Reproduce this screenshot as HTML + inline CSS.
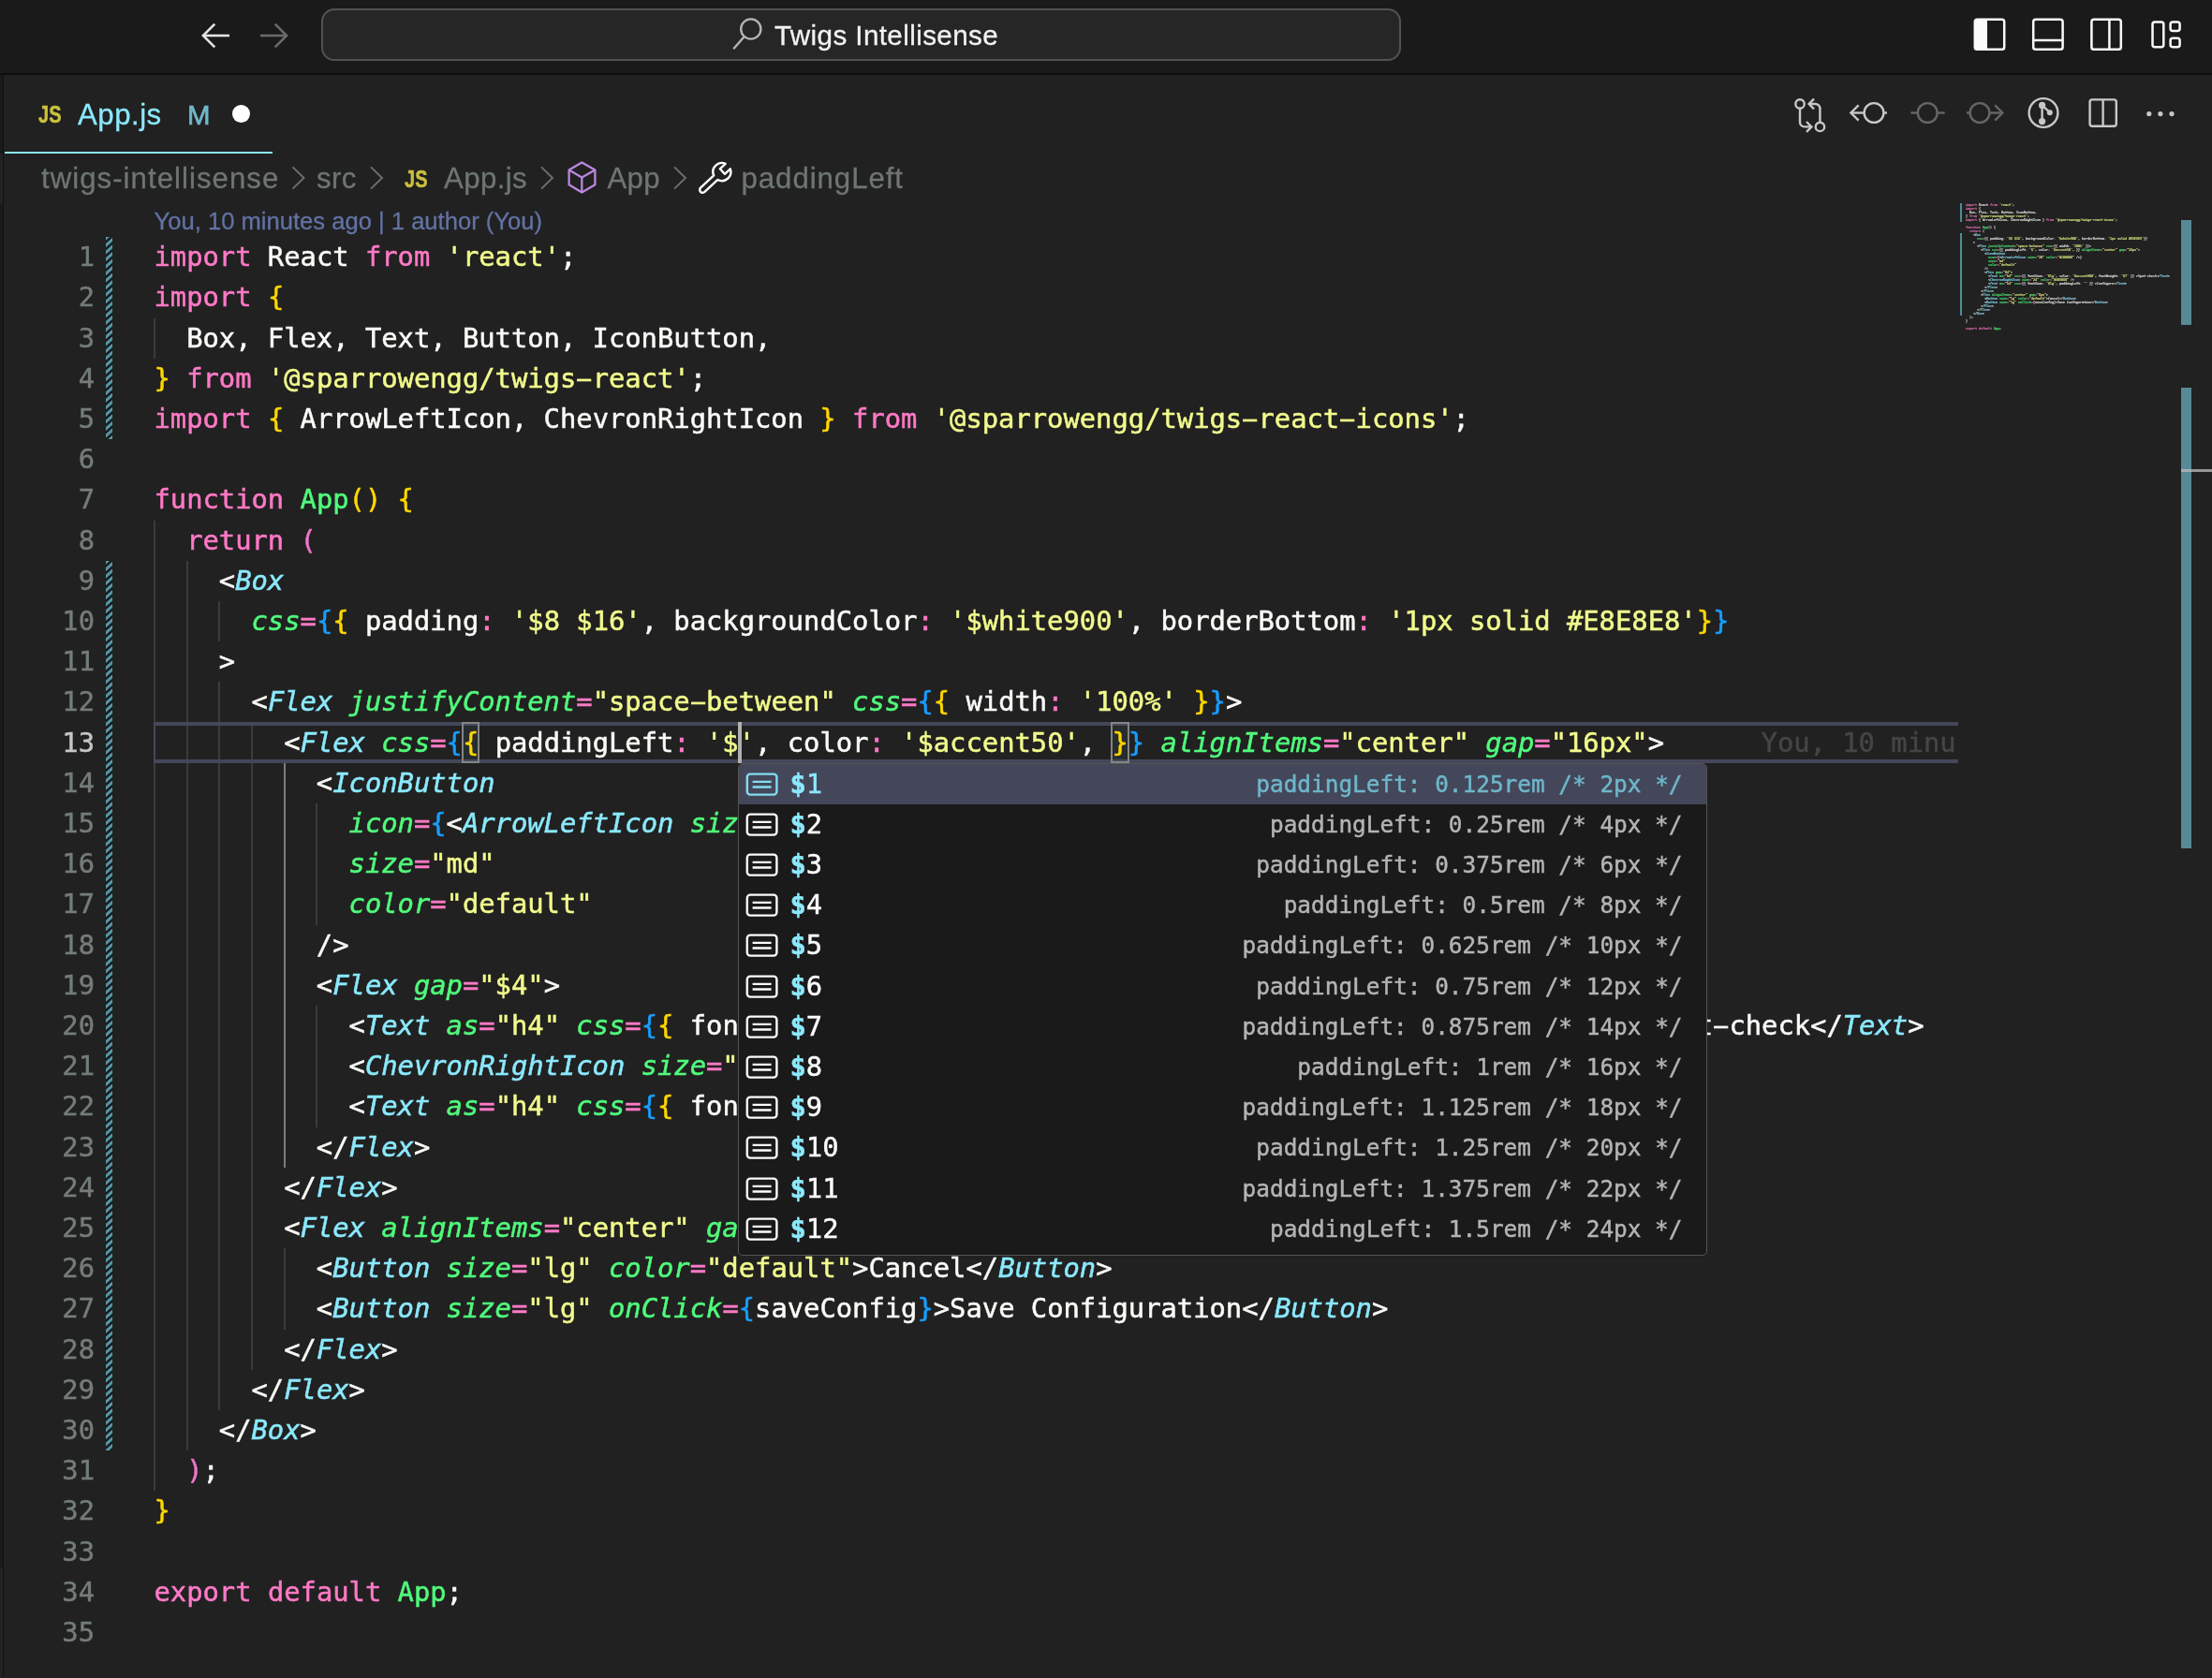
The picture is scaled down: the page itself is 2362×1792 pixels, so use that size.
<!DOCTYPE html>
<html><head><meta charset="utf-8"><title>App.js — Twigs Intellisense</title>
<style>
html,body{margin:0;padding:0}
body{width:2362px;height:1792px;overflow:hidden;position:relative;background:#212121;font-family:"Liberation Sans",sans-serif;color:#fff}
.abs{position:absolute}
#titlebar{left:0;top:0;width:2362px;height:78.4px;background:#1a1a1a;border-bottom:2px solid #0e0e0e}
#cc{left:343px;top:9.2px;width:1149px;height:51.6px;border:2px solid #525252;border-radius:14px;background:#262626}
.ui{position:absolute;white-space:pre;font-size:31.2px;line-height:40px;-webkit-text-stroke:0.3px currentColor}
svg{position:absolute;overflow:visible}
#strip{left:0;top:80.4px;width:2.9px;height:1712px;background:#1a1a1a;border-right:1.9px solid #111}
.mono{font-family:"DejaVu Sans Mono","Liberation Mono",monospace}
.cl{position:absolute;left:164.5px;-webkit-text-stroke:0.5px currentColor;height:43.2px;line-height:43.2px;font-size:28.8px;white-space:pre;color:#fafaf7}
.ln{position:absolute;left:0;width:101px;-webkit-text-stroke:0.45px currentColor;text-align:right;height:43.2px;line-height:43.2px;font-size:28.8px;color:#747c7b}
.k,.p{color:#ff79c6}.s{color:#f1fa8c}.t{color:#8be9fd;font-style:italic}.a{color:#50fa7b;font-style:italic}.f{color:#50fa7b}
.b1{color:#ffd700}.b2{color:#ee77c8}.b3{color:#179fff}
.hy{display:inline-block;position:relative;top:-1.3px;transform:scale(1.95,0.9);transform-origin:50% 61.5%}
.g{position:absolute;width:2px;background:#3b3b3b}
.ga{position:absolute;width:2px;background:#7c7c7c}
.hatch{position:absolute;left:113px;width:7.2px;background:repeating-linear-gradient(138deg,#5694a4 0,#5694a4 2.4px,#191b1c 3.1px,#191b1c 4.9px,#5694a4 5.6px)}
#sw{left:788px;top:814.6px;width:1033px;height:524.4px;background:#1a1a1a;border:1.6px solid #555;border-radius:5px;overflow:hidden}
.row{position:absolute;left:0;width:1033px;height:43.2px;line-height:43.2px;font-size:28.8px;white-space:pre;-webkit-text-stroke:0.45px currentColor}
.row .lab{position:absolute;top:0;left:54.5px;color:#fdfdfd}
.row .hl{color:#8be9fd;font-weight:bold}
.row .det{position:absolute;top:0;right:25.5px;font-size:24.4px;color:#b4b4b4}
.row.sel{background:#44475a}
.row.sel .lab,.row.sel .hl{color:#8be9fd}
.row.sel .det{color:#6fb6ca}
#mm{opacity:0.88;left:2099px;top:216.6px;transform-origin:0 0;transform:scale(0.11535,0.09259);width:2000px}
#mm .cl{left:0;font-weight:bold}
#mm .b1,#mm .b2,#mm .b3{color:#f8f8f2}
.ov{position:absolute;left:2329px;width:11px;background:#588996}
</style></head><body><div id="root" style="position:absolute;left:0;top:0;width:2362px;height:1792px;will-change:transform">

<div id="titlebar" class="abs"></div>
<div id="cc" class="abs"></div>
<svg width="2362" height="80" style="left:0;top:0" fill="none" stroke-linecap="butt" stroke-linejoin="miter">
<g stroke="#e4e4e4" stroke-width="2.6"><path d="M245 38H218"/><path d="M229.3 25.6L216.9 38L229.3 50.4"/></g>
<g stroke="#6a6a6a" stroke-width="2.6"><path d="M278 38H305"/><path d="M293.7 25.6L306.1 38L293.7 50.4"/></g>
<g stroke="#b4b4b4" stroke-width="2.4"><circle cx="801.8" cy="31" r="10.6"/><path d="M794.6 39.2L783.2 52.2"/></g>
<g stroke="#fafafa" stroke-width="2.5">
<rect x="2108.8" y="20.8" width="31.4" height="32" rx="2.6"/><path d="M2109 21h13v31.6h-13z" fill="#fafafa" stroke="none"/>
<rect x="2171.2" y="20.8" width="31.4" height="32" rx="2.6"/><path d="M2171 43H2203"/>
<rect x="2233.4" y="20.8" width="31.4" height="32" rx="2.6"/><path d="M2252.4 21V53"/>
<rect x="2298.5" y="23.6" width="11.8" height="26.6" rx="2.5"/><rect x="2317.6" y="23.6" width="10" height="9.4" rx="2.5"/><rect x="2317.6" y="40.8" width="10" height="9.4" rx="2.5"/>
</g></svg>
<div class="ui" id="ttl" style="left:827px;top:18px;font-size:29.6px;letter-spacing:0.4px;color:#f2f2f2">Twigs Intellisense</div>
<div id="strip" class="abs"></div>
<div class="abs" style="left:0;top:164px;width:2.9px;height:52.6px;background:#232323"></div>
<div class="abs" style="left:0;top:1674px;width:2.9px;height:118px;background:#222"></div>
<div class="abs" style="left:5px;top:161.6px;width:286px;height:2.6px;background:#8be9fd"></div>
<div class="ui" id="tjs" style="left:40.5px;top:102px;font-weight:bold;font-size:25.4px;transform-origin:0 50%;transform:scaleX(0.79);-webkit-text-stroke:0.45px currentColor;color:#cbc13b">JS</div>
<div class="ui" id="tapp" style="left:83px;top:102.6px;letter-spacing:0.5px;color:#8be9fd">App.js</div>
<div class="ui" id="tm" style="left:200px;top:102.8px;font-size:29.4px;-webkit-text-stroke:0.7px currentColor;color:#6fb8cb">M</div>
<div class="abs" style="left:248.3px;top:112.3px;width:18.8px;height:18.8px;border-radius:50%;background:#fff"></div>
<svg width="2362" height="90" style="left:0;top:80px" fill="none" stroke-linecap="butt">
<g transform="translate(0,-80)" stroke="#c8c8c8" stroke-width="2.4">
<circle cx="1922" cy="111" r="4.7"/><circle cx="1943.4" cy="135.4" r="4.7"/>
<path d="M1922 115.6V130.4a5 5 0 0 0 5 5H1934"/><path d="M1929 130l5.4 5.4l-5.4 5.4"/>
<path d="M1943.4 130.8V116a5 5 0 0 0 -5 -5H1931.8"/><path d="M1937 105.6l-5.4 5.4l5.4 5.4"/>
<circle cx="2001" cy="120.5" r="10.4"/><path d="M1990 120.5h-13"/><path d="M1984.6 112.4l-8.2 8.1l8.2 8.1"/><path d="M2012 120.5h3"/>
</g><g transform="translate(0,-80)" stroke="#666" stroke-width="2.4">
<circle cx="2058.2" cy="120.5" r="10.4"/><path d="M2040.5 120.5h7"/><path d="M2069 120.5h7.6"/>
<circle cx="2114" cy="120.5" r="10.4"/><path d="M2100 120.5h3.4"/><path d="M2125 120.5h13"/><path d="M2130.2 112.4l8.2 8.1l-8.2 8.1"/>
</g><g transform="translate(0,-80)" stroke="#c8c8c8" stroke-width="2.4">
<circle cx="2182" cy="120.5" r="15.4"/><circle cx="2180.6" cy="112.4" r="3.6" fill="#c8c8c8" stroke="none"/><circle cx="2188.8" cy="120.2" r="3" fill="#c8c8c8" stroke="none"/><circle cx="2180.6" cy="129.6" r="3.6" fill="#c8c8c8" stroke="none"/><path d="M2180.6 112.4v17"/><path d="M2180.6 112.4l8.2 7.8"/>
<rect x="2231.6" y="106.4" width="28.2" height="28.4" rx="2.5"/><path d="M2245.6 106.4v28.4"/>
<circle cx="2294.8" cy="121.6" r="2.6" fill="#c8c8c8" stroke="none"/><circle cx="2306.9" cy="121.6" r="2.6" fill="#c8c8c8" stroke="none"/><circle cx="2319" cy="121.6" r="2.6" fill="#c8c8c8" stroke="none"/>
</g></svg>
<div class="ui" id="b1" style="left:44px;top:170.5px;letter-spacing:1.03px;color:#6e7574">twigs-intellisense</div>
<div class="ui" id="b2" style="left:338px;top:170.5px;letter-spacing:0.4px;color:#6e7574">src</div>
<div class="ui" id="bjs" style="left:431.5px;top:171px;font-weight:bold;font-size:25.4px;transform-origin:0 50%;transform:scaleX(0.79);-webkit-text-stroke:0.45px currentColor;color:#cbc13b">JS</div>
<div class="ui" id="b3" style="left:474px;top:170.5px;letter-spacing:0.4px;color:#6e7574">App.js</div>
<div class="ui" id="b4" style="left:648.5px;top:170.5px;letter-spacing:0.3px;color:#6e7574">App</div>
<div class="ui" id="b5" style="left:791.5px;top:170.5px;letter-spacing:0.95px;color:#6e7574">paddingLeft</div>
<svg width="2362" height="60" style="left:0;top:160px" fill="none"><g transform="translate(0,-160)">
<path d="M312.5 178.4l12 11.6l-12 11.6" stroke="#6a706f" stroke-width="1.9"/>
<path d="M396 178.4l12 11.6l-12 11.6" stroke="#6a706f" stroke-width="1.9"/>
<path d="M578 178.4l12 11.6l-12 11.6" stroke="#6a706f" stroke-width="1.9"/>
<path d="M720 178.4l12 11.6l-12 11.6" stroke="#6a706f" stroke-width="1.9"/>
<g stroke="#b987e0" stroke-width="2.3" stroke-linejoin="round"><path d="M621.3 173.4L635.4 181.6V197.2L621.3 205.4L607.6 197.2V181.6Z"/><path d="M607.6 181.6L621.3 189.4L635.4 181.6"/><path d="M621.3 189.4V205.4"/></g>
<g transform="translate(770.8,183.6) rotate(-43)" stroke="#fff" stroke-width="2.4" stroke-linejoin="round"><path d="M8.8 -3.8L0.8 -3.8L0.8 3.8L8.8 3.8A9.5 9.5 0 0 1 -8.9 3.1L-28 3.1A3.1 3.1 0 0 1 -28 -3.1L-8.9 -3.1A9.5 9.5 0 0 1 8.8 -3.8Z"/></g>
</g></svg>
<div class="ui" id="lens" style="left:164.5px;top:216px;font-size:25.6px;color:#6272a4">You, 10 minutes ago | 1 author (You)</div>
<div class="ln mono" style="top:253.2px">1</div>
<div class="ln mono" style="top:296.4px">2</div>
<div class="ln mono" style="top:339.6px">3</div>
<div class="ln mono" style="top:382.8px">4</div>
<div class="ln mono" style="top:426.0px">5</div>
<div class="ln mono" style="top:469.2px">6</div>
<div class="ln mono" style="top:512.4px">7</div>
<div class="ln mono" style="top:555.6px">8</div>
<div class="ln mono" style="top:598.8px">9</div>
<div class="ln mono" style="top:642.0px">10</div>
<div class="ln mono" style="top:685.2px">11</div>
<div class="ln mono" style="top:728.4px">12</div>
<div class="ln mono" style="top:771.6px;color:#c6c6c6">13</div>
<div class="ln mono" style="top:814.8px">14</div>
<div class="ln mono" style="top:858.0px">15</div>
<div class="ln mono" style="top:901.2px">16</div>
<div class="ln mono" style="top:944.4px">17</div>
<div class="ln mono" style="top:987.6px">18</div>
<div class="ln mono" style="top:1030.8px">19</div>
<div class="ln mono" style="top:1074.0px">20</div>
<div class="ln mono" style="top:1117.2px">21</div>
<div class="ln mono" style="top:1160.4px">22</div>
<div class="ln mono" style="top:1203.6px">23</div>
<div class="ln mono" style="top:1246.8px">24</div>
<div class="ln mono" style="top:1290.0px">25</div>
<div class="ln mono" style="top:1333.2px">26</div>
<div class="ln mono" style="top:1376.4px">27</div>
<div class="ln mono" style="top:1419.6px">28</div>
<div class="ln mono" style="top:1462.8px">29</div>
<div class="ln mono" style="top:1506.0px">30</div>
<div class="ln mono" style="top:1549.2px">31</div>
<div class="ln mono" style="top:1592.4px">32</div>
<div class="ln mono" style="top:1635.6px">33</div>
<div class="ln mono" style="top:1678.8px">34</div>
<div class="ln mono" style="top:1722.0px">35</div>
<div class="hatch" style="top:253.2px;height:216.0px"></div>
<div class="hatch" style="top:598.8px;height:950.4px"></div>
<div class="g" style="left:164.0px;top:339.6px;height:43.2px"></div>
<div class="g" style="left:164.0px;top:555.6px;height:43.2px"></div>
<div class="g" style="left:164.0px;top:598.8px;height:43.2px"></div>
<div class="g" style="left:198.7px;top:598.8px;height:43.2px"></div>
<div class="g" style="left:164.0px;top:642.0px;height:43.2px"></div>
<div class="g" style="left:198.7px;top:642.0px;height:43.2px"></div>
<div class="g" style="left:233.4px;top:642.0px;height:43.2px"></div>
<div class="g" style="left:164.0px;top:685.2px;height:43.2px"></div>
<div class="g" style="left:198.7px;top:685.2px;height:43.2px"></div>
<div class="g" style="left:164.0px;top:728.4px;height:43.2px"></div>
<div class="g" style="left:198.7px;top:728.4px;height:43.2px"></div>
<div class="g" style="left:233.4px;top:728.4px;height:43.2px"></div>
<div class="g" style="left:164.0px;top:771.6px;height:43.2px"></div>
<div class="g" style="left:198.7px;top:771.6px;height:43.2px"></div>
<div class="g" style="left:233.4px;top:771.6px;height:43.2px"></div>
<div class="g" style="left:268.0px;top:771.6px;height:43.2px"></div>
<div class="g" style="left:164.0px;top:814.8px;height:43.2px"></div>
<div class="g" style="left:198.7px;top:814.8px;height:43.2px"></div>
<div class="g" style="left:233.4px;top:814.8px;height:43.2px"></div>
<div class="g" style="left:268.0px;top:814.8px;height:43.2px"></div>
<div class="ga" style="left:302.7px;top:814.8px;height:43.2px"></div>
<div class="g" style="left:164.0px;top:858.0px;height:43.2px"></div>
<div class="g" style="left:198.7px;top:858.0px;height:43.2px"></div>
<div class="g" style="left:233.4px;top:858.0px;height:43.2px"></div>
<div class="g" style="left:268.0px;top:858.0px;height:43.2px"></div>
<div class="ga" style="left:302.7px;top:858.0px;height:43.2px"></div>
<div class="g" style="left:337.4px;top:858.0px;height:43.2px"></div>
<div class="g" style="left:164.0px;top:901.2px;height:43.2px"></div>
<div class="g" style="left:198.7px;top:901.2px;height:43.2px"></div>
<div class="g" style="left:233.4px;top:901.2px;height:43.2px"></div>
<div class="g" style="left:268.0px;top:901.2px;height:43.2px"></div>
<div class="ga" style="left:302.7px;top:901.2px;height:43.2px"></div>
<div class="g" style="left:337.4px;top:901.2px;height:43.2px"></div>
<div class="g" style="left:164.0px;top:944.4px;height:43.2px"></div>
<div class="g" style="left:198.7px;top:944.4px;height:43.2px"></div>
<div class="g" style="left:233.4px;top:944.4px;height:43.2px"></div>
<div class="g" style="left:268.0px;top:944.4px;height:43.2px"></div>
<div class="ga" style="left:302.7px;top:944.4px;height:43.2px"></div>
<div class="g" style="left:337.4px;top:944.4px;height:43.2px"></div>
<div class="g" style="left:164.0px;top:987.6px;height:43.2px"></div>
<div class="g" style="left:198.7px;top:987.6px;height:43.2px"></div>
<div class="g" style="left:233.4px;top:987.6px;height:43.2px"></div>
<div class="g" style="left:268.0px;top:987.6px;height:43.2px"></div>
<div class="ga" style="left:302.7px;top:987.6px;height:43.2px"></div>
<div class="g" style="left:164.0px;top:1030.8px;height:43.2px"></div>
<div class="g" style="left:198.7px;top:1030.8px;height:43.2px"></div>
<div class="g" style="left:233.4px;top:1030.8px;height:43.2px"></div>
<div class="g" style="left:268.0px;top:1030.8px;height:43.2px"></div>
<div class="ga" style="left:302.7px;top:1030.8px;height:43.2px"></div>
<div class="g" style="left:164.0px;top:1074.0px;height:43.2px"></div>
<div class="g" style="left:198.7px;top:1074.0px;height:43.2px"></div>
<div class="g" style="left:233.4px;top:1074.0px;height:43.2px"></div>
<div class="g" style="left:268.0px;top:1074.0px;height:43.2px"></div>
<div class="ga" style="left:302.7px;top:1074.0px;height:43.2px"></div>
<div class="g" style="left:337.4px;top:1074.0px;height:43.2px"></div>
<div class="g" style="left:164.0px;top:1117.2px;height:43.2px"></div>
<div class="g" style="left:198.7px;top:1117.2px;height:43.2px"></div>
<div class="g" style="left:233.4px;top:1117.2px;height:43.2px"></div>
<div class="g" style="left:268.0px;top:1117.2px;height:43.2px"></div>
<div class="ga" style="left:302.7px;top:1117.2px;height:43.2px"></div>
<div class="g" style="left:337.4px;top:1117.2px;height:43.2px"></div>
<div class="g" style="left:164.0px;top:1160.4px;height:43.2px"></div>
<div class="g" style="left:198.7px;top:1160.4px;height:43.2px"></div>
<div class="g" style="left:233.4px;top:1160.4px;height:43.2px"></div>
<div class="g" style="left:268.0px;top:1160.4px;height:43.2px"></div>
<div class="ga" style="left:302.7px;top:1160.4px;height:43.2px"></div>
<div class="g" style="left:337.4px;top:1160.4px;height:43.2px"></div>
<div class="g" style="left:164.0px;top:1203.6px;height:43.2px"></div>
<div class="g" style="left:198.7px;top:1203.6px;height:43.2px"></div>
<div class="g" style="left:233.4px;top:1203.6px;height:43.2px"></div>
<div class="g" style="left:268.0px;top:1203.6px;height:43.2px"></div>
<div class="ga" style="left:302.7px;top:1203.6px;height:43.2px"></div>
<div class="g" style="left:164.0px;top:1246.8px;height:43.2px"></div>
<div class="g" style="left:198.7px;top:1246.8px;height:43.2px"></div>
<div class="g" style="left:233.4px;top:1246.8px;height:43.2px"></div>
<div class="g" style="left:268.0px;top:1246.8px;height:43.2px"></div>
<div class="g" style="left:164.0px;top:1290.0px;height:43.2px"></div>
<div class="g" style="left:198.7px;top:1290.0px;height:43.2px"></div>
<div class="g" style="left:233.4px;top:1290.0px;height:43.2px"></div>
<div class="g" style="left:268.0px;top:1290.0px;height:43.2px"></div>
<div class="g" style="left:164.0px;top:1333.2px;height:43.2px"></div>
<div class="g" style="left:198.7px;top:1333.2px;height:43.2px"></div>
<div class="g" style="left:233.4px;top:1333.2px;height:43.2px"></div>
<div class="g" style="left:268.0px;top:1333.2px;height:43.2px"></div>
<div class="g" style="left:302.7px;top:1333.2px;height:43.2px"></div>
<div class="g" style="left:164.0px;top:1376.4px;height:43.2px"></div>
<div class="g" style="left:198.7px;top:1376.4px;height:43.2px"></div>
<div class="g" style="left:233.4px;top:1376.4px;height:43.2px"></div>
<div class="g" style="left:268.0px;top:1376.4px;height:43.2px"></div>
<div class="g" style="left:302.7px;top:1376.4px;height:43.2px"></div>
<div class="g" style="left:164.0px;top:1419.6px;height:43.2px"></div>
<div class="g" style="left:198.7px;top:1419.6px;height:43.2px"></div>
<div class="g" style="left:233.4px;top:1419.6px;height:43.2px"></div>
<div class="g" style="left:268.0px;top:1419.6px;height:43.2px"></div>
<div class="g" style="left:164.0px;top:1462.8px;height:43.2px"></div>
<div class="g" style="left:198.7px;top:1462.8px;height:43.2px"></div>
<div class="g" style="left:233.4px;top:1462.8px;height:43.2px"></div>
<div class="g" style="left:164.0px;top:1506.0px;height:43.2px"></div>
<div class="g" style="left:198.7px;top:1506.0px;height:43.2px"></div>
<div class="g" style="left:164.0px;top:1549.2px;height:43.2px"></div>
<div class="abs" style="left:164px;top:771.3px;width:1927px;height:43.8px;box-sizing:border-box;border:4px solid #44475a;border-left-width:2.4px;border-right:none"></div>
<div class="abs" style="left:492.6px;top:771.2px;width:19.7px;height:43.4px;box-sizing:border-box;border:2px solid #858585;background:rgba(80,120,130,0.12)"></div>
<div class="abs" style="left:1186.2px;top:771.2px;width:19.7px;height:43.4px;box-sizing:border-box;border:2px solid #858585;background:rgba(80,120,130,0.12)"></div>
<div class="cl mono" style="top:253.2px"><span class="k">import</span> React <span class="k">from</span> <span class="s">'react'</span>;</div>
<div class="cl mono" style="top:296.4px"><span class="k">import</span> <span class="b1">{</span></div>
<div class="cl mono" style="top:339.6px">  Box, Flex, Text, Button, IconButton,</div>
<div class="cl mono" style="top:382.8px"><span class="b1">}</span> <span class="k">from</span> <span class="s">'@sparrowengg/twigs<span class="hy">-</span>react'</span>;</div>
<div class="cl mono" style="top:426.0px"><span class="k">import</span> <span class="b1">{</span> ArrowLeftIcon, ChevronRightIcon <span class="b1">}</span> <span class="k">from</span> <span class="s">'@sparrowengg/twigs<span class="hy">-</span>react<span class="hy">-</span>icons'</span>;</div>
<div class="cl mono" style="top:512.4px"><span class="k">function</span> <span class="f">App</span><span class="b1">()</span> <span class="b1">{</span></div>
<div class="cl mono" style="top:555.6px">  <span class="k">return</span> <span class="b2">(</span></div>
<div class="cl mono" style="top:598.8px">    &lt;<span class="t">Box</span></div>
<div class="cl mono" style="top:642.0px">      <span class="a">css</span><span class="p">=</span><span class="b3">{</span><span class="b1">{</span> padding<span class="p">:</span> <span class="s">'$8 $16'</span>, backgroundColor<span class="p">:</span> <span class="s">'$white900'</span>, borderBottom<span class="p">:</span> <span class="s">'1px solid #E8E8E8'</span><span class="b1">}</span><span class="b3">}</span></div>
<div class="cl mono" style="top:685.2px">    &gt;</div>
<div class="cl mono" style="top:728.4px">      &lt;<span class="t">Flex</span> <span class="a">justifyContent</span><span class="p">=</span><span class="s">"space<span class="hy">-</span>between"</span> <span class="a">css</span><span class="p">=</span><span class="b3">{</span><span class="b1">{</span> width<span class="p">:</span> <span class="s">'100%'</span> <span class="b1">}</span><span class="b3">}</span>&gt;</div>
<div class="cl mono" style="top:771.6px">        &lt;<span class="t">Flex</span> <span class="a">css</span><span class="p">=</span><span class="b3">{</span><span class="b1">{</span> paddingLeft<span class="p">:</span> <span class="s">'$'</span>, color<span class="p">:</span> <span class="s">'$accent50'</span>, <span class="b1">}</span><span class="b3">}</span> <span class="a">alignItems</span><span class="p">=</span><span class="s">"center"</span> <span class="a">gap</span><span class="p">=</span><span class="s">"16px"</span>&gt;</div>
<div class="cl mono" style="top:814.8px">          &lt;<span class="t">IconButton</span></div>
<div class="cl mono" style="top:858.0px">            <span class="a">icon</span><span class="p">=</span><span class="b3">{</span>&lt;<span class="t">ArrowLeftIcon</span> <span class="a">size</span><span class="p">=</span><span class="s">"20"</span> <span class="a">color</span><span class="p">=</span><span class="s">"#100000"</span> /&gt;<span class="b3">}</span></div>
<div class="cl mono" style="top:901.2px">            <span class="a">size</span><span class="p">=</span><span class="s">"md"</span></div>
<div class="cl mono" style="top:944.4px">            <span class="a">color</span><span class="p">=</span><span class="s">"default"</span></div>
<div class="cl mono" style="top:987.6px">          /&gt;</div>
<div class="cl mono" style="top:1030.8px">          &lt;<span class="t">Flex</span> <span class="a">gap</span><span class="p">=</span><span class="s">"$4"</span>&gt;</div>
<div class="cl mono" style="top:1074.0px">            &lt;<span class="t">Text</span> <span class="a">as</span><span class="p">=</span><span class="s">"h4"</span> <span class="a">css</span><span class="p">=</span><span class="b3">{</span><span class="b1">{</span> fontSize<span class="p">:</span> <span class="s">'$lg'</span>, color<span class="p">:</span> <span class="s">'$accent900'</span>, fontWeight<span class="p">:</span> <span class="s">'$7'</span> <span class="b1">}</span><span class="b3">}</span> &gt;Spot<span class="hy">-</span>check&lt;/<span class="t">Text</span>&gt;</div>
<div class="cl mono" style="top:1117.2px">            &lt;<span class="t">ChevronRightIcon</span> <span class="a">size</span><span class="p">=</span><span class="s">"24"</span> <span class="a">color</span><span class="p">=</span><span class="s">"#808080"</span> /&gt;</div>
<div class="cl mono" style="top:1160.4px">            &lt;<span class="t">Text</span> <span class="a">as</span><span class="p">=</span><span class="s">"h4"</span> <span class="a">css</span><span class="p">=</span><span class="b3">{</span><span class="b1">{</span> fontSize<span class="p">:</span> <span class="s">'$lg'</span>, paddingLeft<span class="p">:</span> <span class="s">''</span> <span class="b1">}</span><span class="b3">}</span> &gt;Configure&lt;/<span class="t">Text</span>&gt;</div>
<div class="cl mono" style="top:1203.6px">          &lt;/<span class="t">Flex</span>&gt;</div>
<div class="cl mono" style="top:1246.8px">        &lt;/<span class="t">Flex</span>&gt;</div>
<div class="cl mono" style="top:1290.0px">        &lt;<span class="t">Flex</span> <span class="a">alignItems</span><span class="p">=</span><span class="s">"center"</span> <span class="a">gap</span><span class="p">=</span><span class="s">"8px"</span>&gt;</div>
<div class="cl mono" style="top:1333.2px">          &lt;<span class="t">Button</span> <span class="a">size</span><span class="p">=</span><span class="s">"lg"</span> <span class="a">color</span><span class="p">=</span><span class="s">"default"</span>&gt;Cancel&lt;/<span class="t">Button</span>&gt;</div>
<div class="cl mono" style="top:1376.4px">          &lt;<span class="t">Button</span> <span class="a">size</span><span class="p">=</span><span class="s">"lg"</span> <span class="a">onClick</span><span class="p">=</span><span class="b3">{</span>saveConfig<span class="b3">}</span>&gt;Save Configuration&lt;/<span class="t">Button</span>&gt;</div>
<div class="cl mono" style="top:1419.6px">        &lt;/<span class="t">Flex</span>&gt;</div>
<div class="cl mono" style="top:1462.8px">      &lt;/<span class="t">Flex</span>&gt;</div>
<div class="cl mono" style="top:1506.0px">    &lt;/<span class="t">Box</span>&gt;</div>
<div class="cl mono" style="top:1549.2px">  <span class="b2">)</span>;</div>
<div class="cl mono" style="top:1592.4px"><span class="b1">}</span></div>
<div class="cl mono" style="top:1678.8px"><span class="k">export</span> <span class="k">default</span> <span class="f">App</span>;</div>
<div class="abs" style="left:1880.6px;top:771.6px;width:209.4px;height:43.2px;overflow:hidden"><div class="cl mono" style="left:0;top:0;color:#454545">You, 10 minutes ago • Uncommitted changes</div></div>
<div class="abs" style="left:788.2px;top:771.2px;width:3.4px;height:43.6px;background:#b0b0b0"></div>
<div id="sw" class="abs mono">
<div class="row sel" style="top:0.0px">
<svg width="40" height="43" style="left:0;top:0" fill="none" stroke="#84dcf0"><rect x="8.8" y="10.6" width="31.6" height="22" rx="3.4" stroke-width="2.4"/><path d="M14.6 18.9h20M14.6 24.5h20" stroke-width="2.4"/></svg>
<span class="lab"><span class="hl">$</span>1</span><span class="det">paddingLeft: 0.125rem /* 2px */</span></div>
<div class="row" style="top:43.2px">
<svg width="40" height="43" style="left:0;top:0" fill="none" stroke="#fbfbfb"><rect x="8.8" y="10.6" width="31.6" height="22" rx="3.4" stroke-width="2.4"/><path d="M14.6 18.9h20M14.6 24.5h20" stroke-width="2.4"/></svg>
<span class="lab"><span class="hl">$</span>2</span><span class="det">paddingLeft: 0.25rem /* 4px */</span></div>
<div class="row" style="top:86.4px">
<svg width="40" height="43" style="left:0;top:0" fill="none" stroke="#fbfbfb"><rect x="8.8" y="10.6" width="31.6" height="22" rx="3.4" stroke-width="2.4"/><path d="M14.6 18.9h20M14.6 24.5h20" stroke-width="2.4"/></svg>
<span class="lab"><span class="hl">$</span>3</span><span class="det">paddingLeft: 0.375rem /* 6px */</span></div>
<div class="row" style="top:129.6px">
<svg width="40" height="43" style="left:0;top:0" fill="none" stroke="#fbfbfb"><rect x="8.8" y="10.6" width="31.6" height="22" rx="3.4" stroke-width="2.4"/><path d="M14.6 18.9h20M14.6 24.5h20" stroke-width="2.4"/></svg>
<span class="lab"><span class="hl">$</span>4</span><span class="det">paddingLeft: 0.5rem /* 8px */</span></div>
<div class="row" style="top:172.8px">
<svg width="40" height="43" style="left:0;top:0" fill="none" stroke="#fbfbfb"><rect x="8.8" y="10.6" width="31.6" height="22" rx="3.4" stroke-width="2.4"/><path d="M14.6 18.9h20M14.6 24.5h20" stroke-width="2.4"/></svg>
<span class="lab"><span class="hl">$</span>5</span><span class="det">paddingLeft: 0.625rem /* 10px */</span></div>
<div class="row" style="top:216.0px">
<svg width="40" height="43" style="left:0;top:0" fill="none" stroke="#fbfbfb"><rect x="8.8" y="10.6" width="31.6" height="22" rx="3.4" stroke-width="2.4"/><path d="M14.6 18.9h20M14.6 24.5h20" stroke-width="2.4"/></svg>
<span class="lab"><span class="hl">$</span>6</span><span class="det">paddingLeft: 0.75rem /* 12px */</span></div>
<div class="row" style="top:259.2px">
<svg width="40" height="43" style="left:0;top:0" fill="none" stroke="#fbfbfb"><rect x="8.8" y="10.6" width="31.6" height="22" rx="3.4" stroke-width="2.4"/><path d="M14.6 18.9h20M14.6 24.5h20" stroke-width="2.4"/></svg>
<span class="lab"><span class="hl">$</span>7</span><span class="det">paddingLeft: 0.875rem /* 14px */</span></div>
<div class="row" style="top:302.4px">
<svg width="40" height="43" style="left:0;top:0" fill="none" stroke="#fbfbfb"><rect x="8.8" y="10.6" width="31.6" height="22" rx="3.4" stroke-width="2.4"/><path d="M14.6 18.9h20M14.6 24.5h20" stroke-width="2.4"/></svg>
<span class="lab"><span class="hl">$</span>8</span><span class="det">paddingLeft: 1rem /* 16px */</span></div>
<div class="row" style="top:345.6px">
<svg width="40" height="43" style="left:0;top:0" fill="none" stroke="#fbfbfb"><rect x="8.8" y="10.6" width="31.6" height="22" rx="3.4" stroke-width="2.4"/><path d="M14.6 18.9h20M14.6 24.5h20" stroke-width="2.4"/></svg>
<span class="lab"><span class="hl">$</span>9</span><span class="det">paddingLeft: 1.125rem /* 18px */</span></div>
<div class="row" style="top:388.8px">
<svg width="40" height="43" style="left:0;top:0" fill="none" stroke="#fbfbfb"><rect x="8.8" y="10.6" width="31.6" height="22" rx="3.4" stroke-width="2.4"/><path d="M14.6 18.9h20M14.6 24.5h20" stroke-width="2.4"/></svg>
<span class="lab"><span class="hl">$</span>10</span><span class="det">paddingLeft: 1.25rem /* 20px */</span></div>
<div class="row" style="top:432.0px">
<svg width="40" height="43" style="left:0;top:0" fill="none" stroke="#fbfbfb"><rect x="8.8" y="10.6" width="31.6" height="22" rx="3.4" stroke-width="2.4"/><path d="M14.6 18.9h20M14.6 24.5h20" stroke-width="2.4"/></svg>
<span class="lab"><span class="hl">$</span>11</span><span class="det">paddingLeft: 1.375rem /* 22px */</span></div>
<div class="row" style="top:475.2px">
<svg width="40" height="43" style="left:0;top:0" fill="none" stroke="#fbfbfb"><rect x="8.8" y="10.6" width="31.6" height="22" rx="3.4" stroke-width="2.4"/><path d="M14.6 18.9h20M14.6 24.5h20" stroke-width="2.4"/></svg>
<span class="lab"><span class="hl">$</span>12</span><span class="det">paddingLeft: 1.5rem /* 24px */</span></div>
</div>
<div id="mm" class="abs mono">
<div class="cl mono" style="top:0.0px"><span class="k">import</span> React <span class="k">from</span> <span class="s">'react'</span>;</div>
<div class="cl mono" style="top:43.2px"><span class="k">import</span> <span class="b1">{</span></div>
<div class="cl mono" style="top:86.4px">  Box, Flex, Text, Button, IconButton,</div>
<div class="cl mono" style="top:129.6px"><span class="b1">}</span> <span class="k">from</span> <span class="s">'@sparrowengg/twigs-react'</span>;</div>
<div class="cl mono" style="top:172.8px"><span class="k">import</span> <span class="b1">{</span> ArrowLeftIcon, ChevronRightIcon <span class="b1">}</span> <span class="k">from</span> <span class="s">'@sparrowengg/twigs-react-icons'</span>;</div>
<div class="cl mono" style="top:259.2px"><span class="k">function</span> <span class="f">App</span><span class="b1">()</span> <span class="b1">{</span></div>
<div class="cl mono" style="top:302.4px">  <span class="k">return</span> <span class="b2">(</span></div>
<div class="cl mono" style="top:345.6px">    &lt;<span class="t">Box</span></div>
<div class="cl mono" style="top:388.8px">      <span class="a">css</span><span class="p">=</span><span class="b3">{</span><span class="b1">{</span> padding<span class="p">:</span> <span class="s">'$8 $16'</span>, backgroundColor<span class="p">:</span> <span class="s">'$white900'</span>, borderBottom<span class="p">:</span> <span class="s">'1px solid #E8E8E8'</span><span class="b1">}</span><span class="b3">}</span></div>
<div class="cl mono" style="top:432.0px">    &gt;</div>
<div class="cl mono" style="top:475.2px">      &lt;<span class="t">Flex</span> <span class="a">justifyContent</span><span class="p">=</span><span class="s">"space-between"</span> <span class="a">css</span><span class="p">=</span><span class="b3">{</span><span class="b1">{</span> width<span class="p">:</span> <span class="s">'100%'</span> <span class="b1">}</span><span class="b3">}</span>&gt;</div>
<div class="cl mono" style="top:518.4px">        &lt;<span class="t">Flex</span> <span class="a">css</span><span class="p">=</span><span class="b3">{</span><span class="b1">{</span> paddingLeft<span class="p">:</span> <span class="s">'$'</span>, color<span class="p">:</span> <span class="s">'$accent50'</span>, <span class="b1">}</span><span class="b3">}</span> <span class="a">alignItems</span><span class="p">=</span><span class="s">"center"</span> <span class="a">gap</span><span class="p">=</span><span class="s">"16px"</span>&gt;</div>
<div class="cl mono" style="top:561.6px">          &lt;<span class="t">IconButton</span></div>
<div class="cl mono" style="top:604.8px">            <span class="a">icon</span><span class="p">=</span><span class="b3">{</span>&lt;<span class="t">ArrowLeftIcon</span> <span class="a">size</span><span class="p">=</span><span class="s">"20"</span> <span class="a">color</span><span class="p">=</span><span class="s">"#100000"</span> /&gt;<span class="b3">}</span></div>
<div class="cl mono" style="top:648.0px">            <span class="a">size</span><span class="p">=</span><span class="s">"md"</span></div>
<div class="cl mono" style="top:691.2px">            <span class="a">color</span><span class="p">=</span><span class="s">"default"</span></div>
<div class="cl mono" style="top:734.4px">          /&gt;</div>
<div class="cl mono" style="top:777.6px">          &lt;<span class="t">Flex</span> <span class="a">gap</span><span class="p">=</span><span class="s">"$4"</span>&gt;</div>
<div class="cl mono" style="top:820.8px">            &lt;<span class="t">Text</span> <span class="a">as</span><span class="p">=</span><span class="s">"h4"</span> <span class="a">css</span><span class="p">=</span><span class="b3">{</span><span class="b1">{</span> fontSize<span class="p">:</span> <span class="s">'$lg'</span>, color<span class="p">:</span> <span class="s">'$accent900'</span>, fontWeight<span class="p">:</span> <span class="s">'$7'</span> <span class="b1">}</span><span class="b3">}</span> &gt;Spot-check&lt;/<span class="t">Text</span>&gt;</div>
<div class="cl mono" style="top:864.0px">            &lt;<span class="t">ChevronRightIcon</span> <span class="a">size</span><span class="p">=</span><span class="s">"24"</span> <span class="a">color</span><span class="p">=</span><span class="s">"#808080"</span> /&gt;</div>
<div class="cl mono" style="top:907.2px">            &lt;<span class="t">Text</span> <span class="a">as</span><span class="p">=</span><span class="s">"h4"</span> <span class="a">css</span><span class="p">=</span><span class="b3">{</span><span class="b1">{</span> fontSize<span class="p">:</span> <span class="s">'$lg'</span>, paddingLeft<span class="p">:</span> <span class="s">''</span> <span class="b1">}</span><span class="b3">}</span> &gt;Configure&lt;/<span class="t">Text</span>&gt;</div>
<div class="cl mono" style="top:950.4px">          &lt;/<span class="t">Flex</span>&gt;</div>
<div class="cl mono" style="top:993.6px">        &lt;/<span class="t">Flex</span>&gt;</div>
<div class="cl mono" style="top:1036.8px">        &lt;<span class="t">Flex</span> <span class="a">alignItems</span><span class="p">=</span><span class="s">"center"</span> <span class="a">gap</span><span class="p">=</span><span class="s">"8px"</span>&gt;</div>
<div class="cl mono" style="top:1080.0px">          &lt;<span class="t">Button</span> <span class="a">size</span><span class="p">=</span><span class="s">"lg"</span> <span class="a">color</span><span class="p">=</span><span class="s">"default"</span>&gt;Cancel&lt;/<span class="t">Button</span>&gt;</div>
<div class="cl mono" style="top:1123.2px">          &lt;<span class="t">Button</span> <span class="a">size</span><span class="p">=</span><span class="s">"lg"</span> <span class="a">onClick</span><span class="p">=</span><span class="b3">{</span>saveConfig<span class="b3">}</span>&gt;Save Configuration&lt;/<span class="t">Button</span>&gt;</div>
<div class="cl mono" style="top:1166.4px">        &lt;/<span class="t">Flex</span>&gt;</div>
<div class="cl mono" style="top:1209.6px">      &lt;/<span class="t">Flex</span>&gt;</div>
<div class="cl mono" style="top:1252.8px">    &lt;/<span class="t">Box</span>&gt;</div>
<div class="cl mono" style="top:1296.0px">  <span class="b2">)</span>;</div>
<div class="cl mono" style="top:1339.2px"><span class="b1">}</span></div>
<div class="cl mono" style="top:1425.6px"><span class="k">export</span> <span class="k">default</span> <span class="f">App</span>;</div>
</div>
<div class="abs" style="left:2093px;top:216.6px;width:2.2px;height:20px;background:#4f8c9c"></div>
<div class="abs" style="left:2093px;top:248.6px;width:2.2px;height:88px;background:#4f8c9c"></div>
<div class="ov" style="top:234.6px;height:112.4px"></div>
<div class="ov" style="top:414px;height:492.4px"></div>
<div class="abs" style="left:2329px;top:500.6px;width:33px;height:3.8px;background:rgba(190,190,190,0.75)"></div>
</div></body></html>
